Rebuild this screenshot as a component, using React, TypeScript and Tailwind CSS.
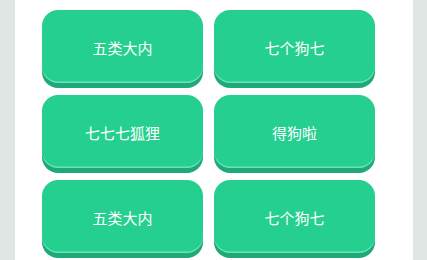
import React from "react";

const items = ["五类大内", "七个狗七", "七七七狐狸", "得狗啦", "五类大内", "七个狗七"];

export default function App() {
  return (
    <div className="w-[427px] h-[260px] bg-[#dfe6e3] px-[15px] overflow-hidden">
      <div className="w-[398px] h-[260px] bg-white pt-[10px] pl-[27px]">
        <div className="grid grid-cols-[161px_161px] gap-x-[11px] gap-y-[7px]">
          {items.map((t, i) => (
            <div key={i} className="h-[78px]">
              <div
                className="h-[73px] rounded-[16px] bg-[#24cf8f] flex items-center justify-center pt-[4px] text-white text-[15px] shadow-[inset_0_-1.5px_0_rgba(140,235,195,0.7),0_5px_0_#1fa97a]"
                style={{ fontFamily: '"Noto Sans CJK SC", "Noto Sans", sans-serif' }}
              >
                {t}
              </div>
            </div>
          ))}
        </div>
      </div>
    </div>
  );
}
